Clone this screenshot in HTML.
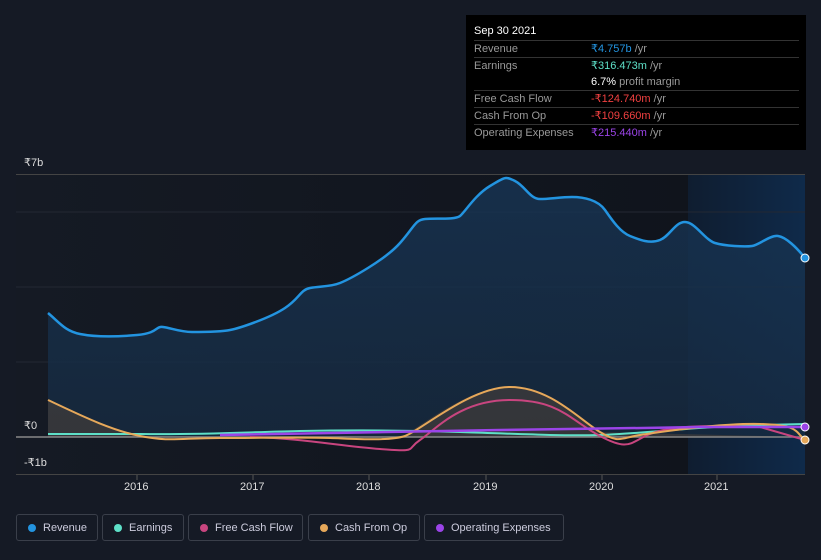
<!DOCTYPE html><html><head><style>
body{margin:0;width:821px;height:560px;background:#151a25;font-family:"Liberation Sans",sans-serif;overflow:hidden;position:relative}
.tt{position:absolute;left:466px;top:15px;width:340px;height:135px;background:#000;color:#fff;font-size:11px}
.tt .h{position:absolute;left:8px;top:10px;font-size:11px}
.row{position:absolute;left:8px;width:325px;height:16px;border-top:1px solid #333;color:#999;line-height:16px}
.row span{position:absolute;left:117px}
.row b{font-weight:normal}
.lg{position:absolute;top:514px;height:27px;border:1px solid #3a3f4a;border-radius:3px;color:#ccd;font-size:11px;line-height:27px;box-sizing:border-box;padding-left:26px}
.lg i{position:absolute;left:11px;top:9px;width:8px;height:8px;border-radius:50%}
.ax{position:absolute;color:#ddd;font-size:11px}
</style></head><body>
<svg width="821" height="560" style="position:absolute;left:0;top:0">
<defs><linearGradient id="g" x1="0" y1="0" x2="1" y2="0"><stop offset="0" stop-color="#151a24"/><stop offset="1" stop-color="#0f131b"/></linearGradient>
<linearGradient id="hl" x1="0" y1="0" x2="1" y2="0"><stop offset="0" stop-color="#0f1d30"/><stop offset="1" stop-color="#0f2a4a"/></linearGradient>
<linearGradient id="rf" x1="0" y1="0" x2="0" y2="1"><stop offset="0" stop-color="#173555"/><stop offset="1" stop-color="#162a40"/></linearGradient></defs>
<rect x="16" y="174" width="789" height="300" fill="url(#g)"/>
<rect x="688" y="174" width="117" height="300" fill="url(#hl)"/>
<line x1="16" y1="174.5" x2="805" y2="174.5" stroke="#444" />
<line x1="16" y1="212" x2="805" y2="212" stroke="#232833"/>
<line x1="16" y1="287" x2="805" y2="287" stroke="#232833"/>
<line x1="16" y1="362" x2="805" y2="362" stroke="#232833"/>
<line x1="16" y1="474.5" x2="805" y2="474.5" stroke="#444"/>
<path id="rv" d="M48,313 C60,323 65,331 80,334 S115,337 137,335 S155,326 163,327 S180,332 192,332 S220,332 230,330 S270,318 285,308 S300,290 310,288 S330,287 340,283 S385,260 400,243 S415,220 425,219 S455,220 460,216 S475,195 490,186 S505,176 515,181 S530,199 540,199 S560,197 572,197 S598,200 605,210 S620,232 630,236 S650,244 660,240 S675,222 685,222 S705,240 715,243 S745,247 752,246 S770,235 778,236 S797,248 805,258 L805,437 L48,437Z" fill="url(#rf)" opacity=".8"/>
<path d="M48,400 C80,415 110,430 140,436 L400,438 C430,420 470,387 510,387 S580,420 600,432 L805,437 L805,437 L48,437Z" fill="#5a4a3a" opacity=".45"/>
<path d="M48,313 C60,323 65,331 80,334 S115,337 137,335 S155,326 163,327 S180,332 192,332 S220,332 230,330 S270,318 285,308 S300,290 310,288 S330,287 340,283 S385,260 400,243 S415,220 425,219 S455,220 460,216 S475,195 490,186 S505,176 515,181 S530,199 540,199 S560,197 572,197 S598,200 605,210 S620,232 630,236 S650,244 660,240 S675,222 685,222 S705,240 715,243 S745,247 752,246 S770,235 778,236 S797,248 805,258" fill="none" stroke="#2394e0" stroke-width="2.5"/>
<line x1="16" y1="437" x2="805" y2="437" stroke="#888" stroke-width="1.5"/>
<path d="M48,434 L140,434 C200,435 250,432 300,431 S400,430 460,432 S560,436 600,435 S700,426 760,425 L805,424" fill="none" stroke="#5ee0c8" stroke-width="2"/>
<path d="M250,437 C300,438 340,446 380,449 S405,450 420,440 S460,400 510,400 S570,420 600,436 S630,442 650,434 S700,425 760,427 L805,440" fill="none" stroke="#c8457f" stroke-width="2"/>
<path d="M48,400 C80,415 110,430 140,436 S180,438 220,438 S300,437 330,438 S390,441 405,436 S470,387 510,387 S580,420 600,432 S620,438 640,435 S720,423 760,424 S795,432 805,440" fill="none" stroke="#e6a85a" stroke-width="2"/>
<path d="M220,435 C300,433 400,431 500,430 S640,428 700,427 L805,427" fill="none" stroke="#9b44e8" stroke-width="2.5"/>
<circle cx="805" cy="258" r="4" fill="#2394e0" stroke="#fff" stroke-width="1"/>
<circle cx="805" cy="427" r="4" fill="#9b44e8" stroke="#fff" stroke-width="1"/>
<circle cx="805" cy="440" r="4" fill="#e6a85a" stroke="#fff" stroke-width="1"/>
<g stroke="#555"><line x1="137" y1="475" x2="137" y2="480"/><line x1="253" y1="475" x2="253" y2="480"/><line x1="369" y1="475" x2="369" y2="480"/><line x1="486" y1="475" x2="486" y2="480"/><line x1="602" y1="475" x2="602" y2="480"/><line x1="717" y1="475" x2="717" y2="480"/></g>
</svg>
<div class="ax" style="left:24px;top:156px">₹7b</div>
<div class="ax" style="left:24px;top:419px">₹0</div>
<div class="ax" style="left:24px;top:456px">-₹1b</div>
<div class="ax" style="left:124px;top:481px">2016</div>
<div class="ax" style="left:240px;top:481px">2017</div>
<div class="ax" style="left:356px;top:481px">2018</div>
<div class="ax" style="left:473px;top:481px">2019</div>
<div class="ax" style="left:589px;top:481px">2020</div>
<div class="ax" style="left:704px;top:481px">2021</div>
<div class="tt"><div class="h">Sep 30 2021</div>
<div class="row" style="top:25px">Revenue<span><b style="color:#2394e0">₹4.757b</b> /yr</span></div>
<div class="row" style="top:42px">Earnings<span><b style="color:#5ee0c8">₹316.473m</b> /yr</span></div>
<div class="row" style="top:59px;border:none"><span><b style="color:#fff">6.7%</b> profit margin</span></div>
<div class="row" style="top:75px">Free Cash Flow<span><b style="color:#f04040">-₹124.740m</b> /yr</span></div>
<div class="row" style="top:92px">Cash From Op<span><b style="color:#f04040">-₹109.660m</b> /yr</span></div>
<div class="row" style="top:109px">Operating Expenses<span><b style="color:#9b44e8">₹215.440m</b> /yr</span></div>
</div>
<div class="lg" style="left:16px;width:82px"><i style="background:#2394e0"></i>Revenue</div>
<div class="lg" style="left:102px;width:82px"><i style="background:#5ee0c8"></i>Earnings</div>
<div class="lg" style="left:188px;width:115px"><i style="background:#c8457f"></i>Free Cash Flow</div>
<div class="lg" style="left:308px;width:112px"><i style="background:#e6a85a"></i>Cash From Op</div>
<div class="lg" style="left:424px;width:140px"><i style="background:#9b44e8"></i>Operating Expenses</div>
</body></html>
